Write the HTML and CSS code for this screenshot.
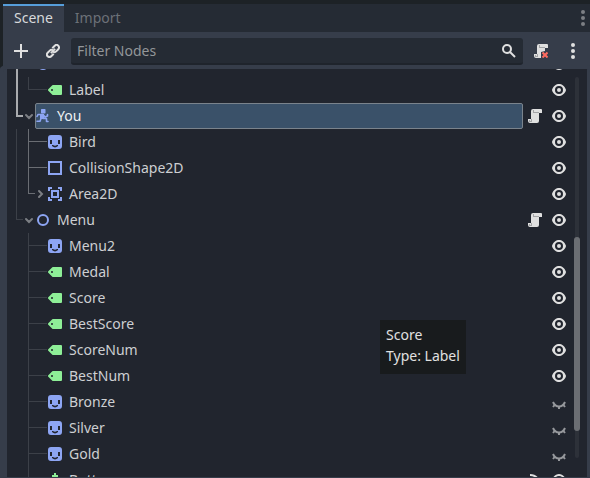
FILE: index.html
```html
<!DOCTYPE html>
<html lang="en">
<head>
<meta charset="utf-8">
<title>Scene</title>
<link rel="stylesheet" href="styles.css">
</head>
<body>
<svg class="defs" aria-hidden="true">
  <symbol id="label" viewBox="1 1 14 14"><path fill-rule="evenodd" d="M6 3a1 1 0 0 0-.7.3l-4 4a1 1 0 0 0 0 1.4l4 4a1 1 0 0 0 .7.3h8a1 1 0 0 0 1-1V4a1 1 0 0 0-1-1zM5 7a1 1 0 0 1 0 2 1 1 0 0 1 0-2z"/></symbol>
  <symbol id="sprite" viewBox="1 1 14 14"><path fill-rule="evenodd" d="M4 1a3 3 0 0 0-3 3v8a3 3 0 0 0 3 3h8a3 3 0 0 0 3-3V4a3 3 0 0 0-3-3zM3 6h2v4H3zM11 6h2v4h-2zM5 11h1q2 1.400 4 0h1v1q-3 2.800-6 0z"/></symbol>
  <symbol id="shape" viewBox="1 1 14 14"><path fill="none" stroke="currentColor" stroke-width="2" d="M2 2h12v12H2z"/></symbol>
  <symbol id="area" viewBox="1 1 14 14"><path fill="none" stroke="currentColor" stroke-width="2" d="M5 2H2v3M11 2h3v3M5 14H2v-3M11 14h3v-3M5 5h6v6H5z"/></symbol>
  <symbol id="node" viewBox="1 1 14 14"><circle cx="8" cy="8" r="5" fill="none" stroke="currentColor" stroke-width="2"/></symbol>
  <symbol id="runner" viewBox="1 1 14 14"><path d="M6.500 1H10l.5.500V5L10 5.500H6.500L6 5V1.500zM5 6h4v5H5z"/><path fill="none" stroke="currentColor" stroke-width="1.600" stroke-linejoin="round" stroke-linecap="round" d="M2 8.500 3 6.500h5L10 9l2.500-1V6.500M8 10.500h3.500v3h1.500M6 10.500l-1 2.800H2"/></symbol>
  <symbol id="button" viewBox="1 1 14 14"><path d="M7 1h2v2h2v2H9v3H7V5H5V3h2zM3 9h10v5H3z"/></symbol>
  <symbol id="script" viewBox="1 1 14 14"><path d="M6 1a2 2 0 0 0-2 2v8H1v2a2 2 0 0 0 2 2h7a2 2 0 0 0 2-2V5h3V2a1 1 0 0 0-1-1z"/><path class="fold" d="M6 2h1v2h5v1H6zM2 12h1v1h1v-2h1v3H2z"/></symbol>
  <symbol id="detach" viewBox="1 1 14 14"><path d="M6 1a2 2 0 0 0-2 2v8H1v2a2 2 0 0 0 2 2h5V9l4-1V5h3V2a1 1 0 0 0-1-1z"/><path class="fold" d="M6 2h1v2h5v1H6zM2 12h1v1h1v-2h1v3H2z"/><path fill="none" stroke="#ff6b60" stroke-width="2" d="m9.500 9.500 5 5m0-5-5 5"/></symbol>
  <symbol id="eye" viewBox="1 1 14 14"><path fill-rule="evenodd" d="M8 2C5.443 2 2.209 3.948 1.045 7.705a1 1 0 0 0 0 .565C2.163 12.211 5.500 14 8 14s5.836-1.789 6.965-5.730a1 1 0 0 0 0-.552C13.834 3.949 10.557 2 8 2zm0 2a4 4 0 0 1 0 8 4 4 0 0 1 0-8zm0 2a2 2 0 0 0 0 4 2 2 0 0 0 0-4z"/></symbol>
  <symbol id="closed" viewBox="1 1 14 14"><path fill="none" stroke="currentColor" stroke-width="2" d="M2 8q2 4.500 6 4.500T14 8"/><path fill="none" stroke="currentColor" stroke-width="2" d="M8 12v3M4 10.500 2 13M12 10.500l2 2.500"/></symbol>
  <symbol id="signal" viewBox="1 1 14 14"><path fill="none" stroke="currentColor" stroke-width="2" d="M3 3c6 0 9 4 10 10M3 7c3 0 5 2 6 6"/></symbol>
  <symbol id="down" viewBox="0 0 12 12"><path fill="none" stroke="currentColor" stroke-width="2" stroke-linecap="round" d="m3 5 3 3 3-3"/></symbol>
  <symbol id="right" viewBox="0 0 12 12"><path fill="none" stroke="currentColor" stroke-width="2" stroke-linecap="round" d="m4 3 3 3-3 3"/></symbol>
  <symbol id="dots" viewBox="0 0 4 16"><circle cx="2" cy="2" r="2"/><circle cx="2" cy="8" r="2"/><circle cx="2" cy="14" r="2"/></symbol>
</svg>

<main class="dock">
  <div class="tabs" role="tablist">
    <button class="tab active" role="tab" aria-selected="true">Scene</button>
    <button class="tab" role="tab" aria-selected="false">Import</button>
    <button class="tab-menu" aria-label="Dock options"><svg class="dots"><use href="#dots"/></svg></button>
  </div>

  <div class="toolbar">
    <button class="tool" aria-label="Add node"><svg viewBox="1 1 14 14"><path fill="none" stroke="currentColor" stroke-width="2" d="M8 1v14M1 8h14"/></svg></button>
    <button class="tool" aria-label="Instance scene"><svg viewBox="1 1 14 14"><g fill="none" stroke="currentColor" stroke-width="2" transform="rotate(-45 8 8)"><path d="M6.500 10.500H3a2.500 2.500 0 0 1 0-5h3a2.500 2.500 0 0 1 2.400 1.700M9.500 5.500H13a2.500 2.500 0 0 1 0 5h-3a2.500 2.500 0 0 1-2.400-1.700M5 8h6"/></g></svg></button>
    <label class="filter">
      <input type="text" placeholder="Filter Nodes" aria-label="Filter Nodes">
      <svg viewBox="1 1 14 14"><g fill="none" stroke="currentColor" stroke-width="2"><circle cx="6" cy="6" r="4"/><path d="m9 9 5 5"/></g></svg>
    </label>
    <button class="tool detach" aria-label="Detach script"><svg><use href="#detach"/></svg></button>
    <button class="tool more" aria-label="More options"><svg class="dots"><use href="#dots"/></svg></button>
  </div>

  <section class="tree">
    <ul class="rows">
      <li class="row"><span class="guide pass bold"></span><span class="item blue"><svg><use href="#node"/></svg></span><button class="act" aria-label="Visible"><svg><use href="#eye"/></svg></button></li>
      <li class="row"><span class="guide pass bold"></span><span class="guide long last"></span><span class="item green"><svg><use href="#label"/></svg><span>Label</span></span><button class="act" aria-label="Visible"><svg><use href="#eye"/></svg></button></li>
      <li class="row"><span class="guide elbow last bold"></span><button class="fold-btn" aria-label="Collapse"><svg><use href="#down"/></svg></button><span class="item blue selected"><svg><use href="#runner"/></svg><span>You</span></span><button class="act" aria-label="Script"><svg><use href="#script"/></svg></button><button class="act" aria-label="Visible"><svg><use href="#eye"/></svg></button></li>
      <li class="row"><span class="guide pass"></span><span class="guide long mid"></span><span class="item blue"><svg><use href="#sprite"/></svg><span>Bird</span></span><button class="act" aria-label="Visible"><svg><use href="#eye"/></svg></button></li>
      <li class="row"><span class="guide pass"></span><span class="guide long mid"></span><span class="item blue"><svg><use href="#shape"/></svg><span>CollisionShape2D</span></span><button class="act" aria-label="Visible"><svg><use href="#eye"/></svg></button></li>
      <li class="row"><span class="guide pass"></span><span class="guide elbow last mid"></span><button class="fold-btn" aria-label="Expand"><svg><use href="#right"/></svg></button><span class="item blue"><svg><use href="#area"/></svg><span>Area2D</span></span><button class="act" aria-label="Visible"><svg><use href="#eye"/></svg></button></li>
      <li class="row"><span class="guide elbow last"></span><button class="fold-btn" aria-label="Collapse"><svg><use href="#down"/></svg></button><span class="item blue"><svg><use href="#node"/></svg><span>Menu</span></span><button class="act" aria-label="Script"><svg><use href="#script"/></svg></button><button class="act" aria-label="Visible"><svg><use href="#eye"/></svg></button></li>
      <li class="row"><span class="guide blank"></span><span class="guide long"></span><span class="item blue"><svg><use href="#sprite"/></svg><span>Menu2</span></span><button class="act" aria-label="Visible"><svg><use href="#eye"/></svg></button></li>
      <li class="row"><span class="guide blank"></span><span class="guide long"></span><span class="item green"><svg><use href="#label"/></svg><span>Medal</span></span><button class="act" aria-label="Visible"><svg><use href="#eye"/></svg></button></li>
      <li class="row"><span class="guide blank"></span><span class="guide long"></span><span class="item green"><svg><use href="#label"/></svg><span>Score</span></span><button class="act" aria-label="Visible"><svg><use href="#eye"/></svg></button></li>
      <li class="row"><span class="guide blank"></span><span class="guide long"></span><span class="item green"><svg><use href="#label"/></svg><span>BestScore</span></span><button class="act" aria-label="Visible"><svg><use href="#eye"/></svg></button></li>
      <li class="row"><span class="guide blank"></span><span class="guide long"></span><span class="item green"><svg><use href="#label"/></svg><span>ScoreNum</span></span><button class="act" aria-label="Visible"><svg><use href="#eye"/></svg></button></li>
      <li class="row"><span class="guide blank"></span><span class="guide long"></span><span class="item green"><svg><use href="#label"/></svg><span>BestNum</span></span><button class="act" aria-label="Visible"><svg><use href="#eye"/></svg></button></li>
      <li class="row"><span class="guide blank"></span><span class="guide long"></span><span class="item blue"><svg><use href="#sprite"/></svg><span>Bronze</span></span><button class="act hidden" aria-label="Hidden"><svg><use href="#closed"/></svg></button></li>
      <li class="row"><span class="guide blank"></span><span class="guide long"></span><span class="item blue"><svg><use href="#sprite"/></svg><span>Silver</span></span><button class="act hidden" aria-label="Hidden"><svg><use href="#closed"/></svg></button></li>
      <li class="row"><span class="guide blank"></span><span class="guide long"></span><span class="item blue"><svg><use href="#sprite"/></svg><span>Gold</span></span><button class="act hidden" aria-label="Hidden"><svg><use href="#closed"/></svg></button></li>
      <li class="row"><span class="guide blank"></span><span class="guide long"></span><span class="item green"><svg><use href="#button"/></svg><span>Button</span></span><button class="act" aria-label="Signals"><svg><use href="#signal"/></svg></button><button class="act" aria-label="Visible"><svg><use href="#eye"/></svg></button></li>
    </ul>
    <div class="scrollbar"><div class="thumb"></div></div>
    <div class="tooltip" role="tooltip">Score<br>Type: Label</div>
  </section>
</main>
</body>
</html>
```
FILE: styles.css
```css
* { box-sizing: border-box; }

body {
  margin: 0;
  background: #1d2226;
  color: #cdcfd2;
  font: 14px/20px "Noto Sans", "Open Sans", sans-serif;
}

button {
  margin: 0;
  padding: 0;
  border: 0;
  background: none;
  color: inherit;
  font: inherit;
}

svg {
  display: block;
  flex: none;
  width: 14px;
  height: 14px;
  fill: currentColor;
}

.defs { position: absolute; width: 0; height: 0; }
.dots { width: 4px; height: 16px; }
.fold { fill: #a3a4a6; }

.dock {
  display: flex;
  flex-direction: column;
  height: 100vh;
  padding: 4px 0 0 3px;
}

.tabs {
  display: flex;
  flex: none;
  height: 28px;
  background: #252b34;
}

.tab {
  padding: 0 11px 2px;
  border-top: 2px solid transparent;
  color: #6c7178;
}

.tab.active {
  border-color: #569eda;
  background: #363d4a;
  color: #d7d9db;
}

.tab-menu {
  margin-left: auto;
  padding-right: 5px;
  color: #7c7f84;
}

.toolbar {
  display: flex;
  flex: none;
  align-items: center;
  height: 37px;
  padding: 1px 4px 0 2px;
  background: #363d4a;
  color: #e0e0e0;
}

.tool {
  display: flex;
  align-items: center;
  justify-content: center;
  width: 32px;
  height: 28px;
}

.filter {
  display: flex;
  flex: 1;
  align-items: center;
  height: 27px;
  margin-left: 2px;
  padding: 1px 7px 0 6px;
  border-bottom: 2px solid #1f242c;
  border-radius: 3px;
  background: #252b34;
}

.filter input {
  flex: 1;
  min-width: 0;
  padding: 0;
  border: 0;
  outline: 0;
  background: none;
  color: #cdcfd2;
  font: inherit;
}

.filter input::placeholder { color: #939699; opacity: 1; }
.detach { width: 36px; }
.more { width: 27px; }

.tree {
  position: relative;
  display: flex;
  flex: 1;
  min-height: 0;
  overflow: hidden;
  border: solid #363d4a;
  border-width: 0 3px 1px 4px;
  border-radius: 3px;
  background: #21252e;
  box-shadow: 0 0 0 4px #363d4a;
}

.rows {
  flex: 1;
  margin: -18px 0 0;
  padding: 0 0 0 9px;
  list-style: none;
}

.row { display: flex; height: 26px; }

.guide {
  --line: #3c4048;
  flex: none;
  width: 12px;
  background-repeat: no-repeat;
  background-image: linear-gradient(var(--line), var(--line)), linear-gradient(var(--line), var(--line));
  background-size: 1px 100%, 100% 1px;
  background-position: 0 0, 0 12px;
}

.guide.pass { background-size: 1px 100%, 0 0; }
.guide.blank { background: none; }
.guide.elbow { width: 7px; }
.guide.long { width: 19px; }
.guide.last { background-size: 1px 13px, 100% 1px; }
.guide.mid { --line: #6a6d73; }
.guide.bold { --line: #a9abae; }
.guide.pass.bold { background-size: 2px 100%, 0 0; }
.guide.elbow.bold { background-size: 2px 14px, 100% 2px; }

.fold-btn {
  display: flex;
  align-items: center;
  width: 12px;
  color: #7c7f84;
}

.fold-btn svg { width: 12px; height: 12px; }

.item {
  display: flex;
  flex: 1;
  align-items: center;
  gap: 7px;
  min-width: 0;
  padding-left: 1px;
}

.item span { color: #cdcfd2; }
.pass:first-child + .item { margin-left: 7px; }
.blue { color: #8da5f3; }
.green { color: #8eef97; }

.selected {
  padding-left: 0;
  border: 1px solid #7a838c;
  border-radius: 2px;
  background: #3a5169;
}

.selected span { color: #f0f2f4; }

.act {
  display: flex;
  flex: none;
  align-items: center;
  justify-content: center;
  width: 24px;
  color: #e0e0e0;
}

.act.hidden { color: #96989c; }

.scrollbar {
  position: relative;
  flex: none;
  width: 4px;
  margin: 8px 8px 19px 4px;
  border-radius: 2px;
  background: #2d3139;
}

.thumb {
  position: absolute;
  top: 42%;
  right: -1px;
  left: -1px;
  height: 51%;
  border-radius: 3px;
  background: #6b6e73;
}

.tooltip {
  position: absolute;
  top: 251px;
  left: 373px;
  padding: 4px 6px 8px;
  background: #181b1d;
  color: #e0e0e0;
  line-height: 21px;
}
```
